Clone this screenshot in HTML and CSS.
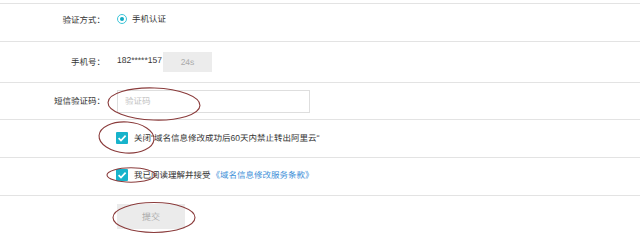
FILE: index.html
```html
<!DOCTYPE html>
<html lang="zh-CN">
<head>
<meta charset="utf-8">
<title>验证</title>
<link rel="stylesheet" href="styles.css">
</head>
<body>
<div class="form">
  <div class="row r1">
    <div class="label">验证方式：</div>
    <div class="field">
      <span class="radio"><span class="dot"></span></span>
      <span class="radio-text">手机认证</span>
    </div>
  </div>
  <div class="row r2">
    <div class="label">手机号：</div>
    <div class="field">
      <span class="phone">182*****157</span>
      <button class="count">24s</button>
    </div>
  </div>
  <div class="row r3">
    <div class="label">短信验证码：</div>
    <div class="field">
      <input class="code" type="text" placeholder="验证码">
    </div>
  </div>
  <div class="row r4">
    <div class="label"></div>
    <div class="field">
      <svg class="check" width="12" height="12" viewBox="0 0 12 12"><rect width="12" height="12" rx="1" fill="#17b3cb"/><path d="M2.6 6.1 L5 8.6 L9.6 3.6" fill="none" stroke="#fff" stroke-width="1.7"/></svg>
      <span class="check-text">关闭"域名信息修改成功后60天内禁止转出阿里云"</span>
    </div>
  </div>
  <div class="row r5">
    <div class="label"></div>
    <div class="field">
      <svg class="check" width="12" height="12" viewBox="0 0 12 12"><rect width="12" height="12" rx="1" fill="#17b3cb"/><path d="M2.6 6.1 L5 8.6 L9.6 3.6" fill="none" stroke="#fff" stroke-width="1.7"/></svg>
      <span class="check-text">我已阅读理解并接受</span><a class="link" href="#">《域名信息修改服务条款》</a>
    </div>
  </div>
  <div class="row r6">
    <div class="label"></div>
    <div class="field">
      <button class="submit">提交</button>
    </div>
  </div>
  <svg class="marks" width="640" height="239" viewBox="0 0 640 239">
    <ellipse cx="154" cy="104" rx="46" ry="16" transform="rotate(2 154 104)"/>
    <ellipse cx="126.5" cy="137.5" rx="27.5" ry="15.5" transform="rotate(4 126.5 137.5)"/>
    <ellipse cx="131" cy="175" rx="24" ry="7.2"/>
    <ellipse cx="154" cy="217.5" rx="41" ry="15"/>
  </svg>
</div>
</body>
</html>
```
FILE: styles.css
```css
html, body {
  margin: 0;
  padding: 0;
  background: #fff;
}
body {
  font-family: "Liberation Sans", "Noto Sans CJK SC", sans-serif;
  font-size: 8.5px;
  text-rendering: geometricPrecision;
  color: #333;
}
.form {
  position: relative;
  padding-top: 3px;
  width: 640px;
  height: 236px;
  overflow: hidden;
}
.row {
  display: flex;
  align-items: center;
  box-sizing: border-box;
  border-top: 1px solid #e3e3e3;
}
.r1 { height: 38px; padding-bottom: 5px; }
.r2 { height: 41px; padding-bottom: 1px; }
.r3 { height: 37px; }
.r4 { height: 38px; padding-bottom: 2px; }
.r5 { height: 38px; padding-bottom: 3px; }
.r6 { height: 44px; align-items: flex-start; padding-top: 8px; }
.label {
  width: 105px;
  margin-right: 12px;
  text-align: right;
  flex: none;
  color: #333;
}
.field {
  display: flex;
  align-items: center;
}
.radio {
  width: 10px;
  height: 10px;
  box-sizing: border-box;
  border: 1.5px solid #3cc6da;
  border-radius: 50%;
  display: flex;
  align-items: center;
  justify-content: center;
  margin-top: -3px;
}
.dot {
  width: 4px;
  height: 4px;
  border-radius: 50%;
  background: #12aac2;
}
.radio-text {
  margin-left: 5px;
  margin-top: -3px;
}
.phone {
  width: 46px;
  margin-top: -3px;
}
.count {
  width: 49px;
  height: 20px;
  border: none;
  background: #ececec;
  color: #aaa;
  font-family: "Liberation Sans", "Noto Sans CJK SC", sans-serif;
  font-size: 8.5px;
  text-rendering: geometricPrecision;
  padding: 0;
}
.code {
  width: 193px;
  height: 23px;
  box-sizing: border-box;
  border: 1px solid #dedede;
  padding: 0 0 0 7px;
  margin: 0;
  font-family: "Liberation Sans", "Noto Sans CJK SC", sans-serif;
  font-size: 8.5px;
  text-rendering: geometricPrecision;
  color: #333;
  outline: none;
}
.code::placeholder {
  color: #c4c4c4;
}
.check {
  display: block;
  margin-left: -1px;
  flex: none;
}
.check-text {
  margin-left: 6px;
  color: #333;
}
.link {
  color: #3d8fd8;
  text-decoration: none;
  margin-left: 1px;
}
.submit {
  width: 68px;
  height: 25px;
  border: none;
  background: #ebebeb;
  color: #aaa;
  font-family: "Liberation Sans", "Noto Sans CJK SC", sans-serif;
  font-size: 9px;
  text-rendering: geometricPrecision;
  padding: 0;
}
.marks {
  position: absolute;
  left: 0;
  top: 0;
  pointer-events: none;
}
.marks ellipse {
  fill: none;
  stroke: #8a3b3b;
  stroke-width: 1.1;
}
```
